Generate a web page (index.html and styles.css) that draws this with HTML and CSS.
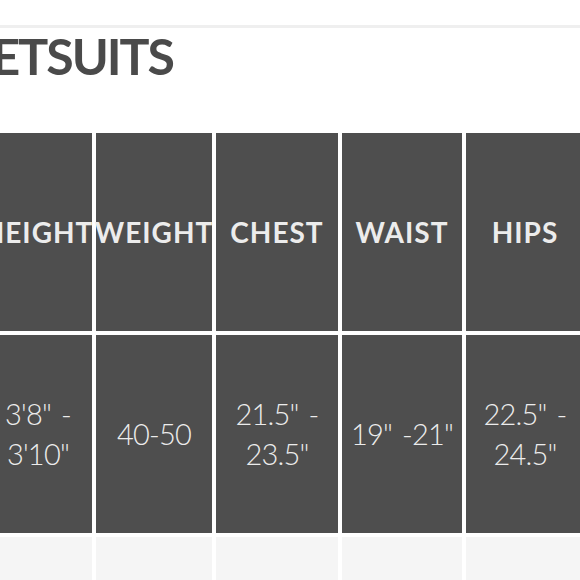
FILE: index.html
```html
<!DOCTYPE html>
<html lang="en">
<head>
<meta charset="utf-8">
<title>Wetsuits size chart</title>
<link rel="stylesheet" href="styles.css">
</head>
<body>
<div class="page">
  <div class="topbar"></div>
  <div class="content">
    <h1 class="title">WETSUITS</h1>
    <div class="chart">
      <div class="cell head">HEIGHT</div>
      <div class="cell head">WEIGHT</div>
      <div class="cell head">CHEST</div>
      <div class="cell head">WAIST</div>
      <div class="cell head">HIPS</div>

      <div class="cell val">3'8" -<br>3'10"</div>
      <div class="cell val">40-50</div>
      <div class="cell val">21.5" -<br>23.5"</div>
      <div class="cell val">19" -21"</div>
      <div class="cell val">22.5" -<br>24.5"</div>

      <div class="cell light"></div>
      <div class="cell light"></div>
      <div class="cell light"></div>
      <div class="cell light"></div>
      <div class="cell light"></div>
    </div>
  </div>
</div>
</body>
</html>
```

FILE: styles.css
```css
html, body {
  margin: 0;
  padding: 0;
  background: #ffffff;
}

.page {
  width: 580px;
  height: 580px;
  overflow: hidden;
  font-family: "Lato", "Liberation Sans", sans-serif;
}

.topbar {
  height: 25px;
  border-bottom: 3px solid #efefef;
}

.content {
  margin-left: -16px;
}

.title {
  margin: 3px 0 0 -43px;
  font-size: 50px;
  line-height: 50px;
  font-weight: 700;
  color: #4a4a4a;
  letter-spacing: -2px;
}

.chart {
  margin-top: 52px;
  display: grid;
  grid-template-columns: 108px 116px 122px 120px 118px;
  grid-template-rows: 198px 198px 198px;
  gap: 4px;
}

.cell {
  display: flex;
  align-items: center;
  justify-content: center;
  text-align: center;
  white-space: nowrap;
}

.head {
  background: #4e4e4e;
  color: #ececec;
  font-size: 28px;
  font-weight: 700;
  letter-spacing: 1px;
}

.val {
  background: #4e4e4e;
  color: #ececec;
  font-size: 29px;
  font-weight: 300;
  line-height: 40px;
  letter-spacing: -0.8px;
  word-spacing: 3px;
}

.light {
  background: #f5f5f5;
}
```
